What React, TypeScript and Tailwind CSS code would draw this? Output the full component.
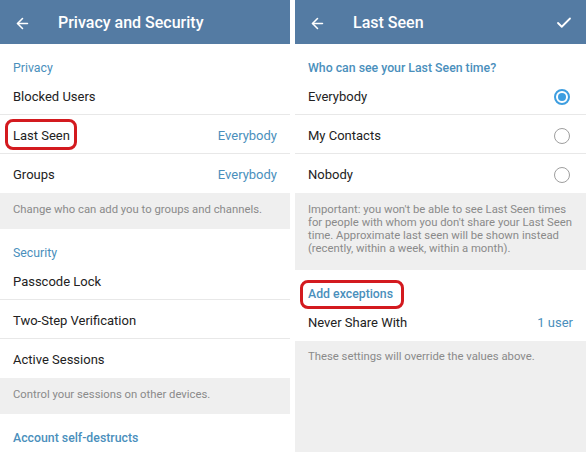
import { ArrowLeft, Check } from "lucide-react";

const font = { fontFamily: "Roboto, 'Noto Sans', sans-serif" };

const Header = ({ title, check }: { title: string; check?: boolean }) => (
  <div className="h-[44px] bg-[#547ba3] flex items-center text-white pt-[2px]">
    <ArrowLeft className="w-[17px] h-[17px] ml-[14px]" strokeWidth={2.2} />
    <div className="ml-[27px] text-[16px] font-medium flex-1">{title}</div>
    {check && <Check className="w-[18px] h-[18px] mr-[13px]" strokeWidth={2.4} />}
  </div>
);

const Label = ({ children, bold }: { children: React.ReactNode; bold?: boolean }) => (
  <div className={`h-[32px] pt-[16px] px-[13px] text-[12.3px] leading-[16px] text-[#4a8fbc] ${bold ? "font-medium" : ""}`}>
    {children}
  </div>
);

const Row = ({ text, value, last, children }: { text: string; value?: string; last?: boolean; children?: React.ReactNode }) => (
  <div className={`relative h-[39px] pt-[3px] flex items-center justify-between px-[13px] ${last ? "" : "border-b border-[#e8e8e8]"}`}>
    <span className="text-[13px] text-[#222]">{text}</span>
    {value && <span className="text-[13px] text-[#4a8fbc]">{value}</span>}
    {children}
  </div>
);

const Note = ({ children, className = "" }: { children: React.ReactNode; className?: string }) => (
  <div className={`bg-[#efefef] px-[13px] text-[11.3px] leading-[13px] text-[#8a8a8a] ${className}`}>{children}</div>
);

const Radio = ({ on }: { on?: boolean }) =>
  on ? (
    <span className="w-[16px] h-[16px] mr-[3px] rounded-full border-2 border-[#3e9ee0] flex items-center justify-center">
      <span className="w-[8px] h-[8px] rounded-full bg-[#3e9ee0]" />
    </span>
  ) : (
    <span className="w-[16px] h-[16px] mr-[3px] rounded-full border-[1.5px] border-[#9e9e9e]" />
  );

export default function App() {
  return (
    <div className="w-[586px] h-[452px] bg-white flex gap-[5px] overflow-hidden" style={font}>
      {/* left: privacy and security */}
      <div className="w-[290px] flex flex-col">
        <Header title="Privacy and Security" />
        <Label>Privacy</Label>
        <Row text="Blocked Users" />
        <Row text="Last Seen" value="Everybody">
          <div className="absolute left-[5px] top-[4px] w-[72px] h-[31px] border-[3px] border-[#d31a1f] rounded-[8px]" />
        </Row>
        <Row text="Groups" value="Everybody" last />
        <Note className="pt-[10px] pb-[13px]">Change who can add you to groups and channels.</Note>
        <Label>Security</Label>
        <Row text="Passcode Lock" />
        <Row text="Two-Step Verification" />
        <Row text="Active Sessions" last />
        <Note className="pt-[10px] pb-[13px]">Control your sessions on other devices.</Note>
        <Label bold>Account self-destructs</Label>
      </div>

      {/* right: last seen */}
      <div className="flex-1 flex flex-col">
        <Header title="Last Seen" check />
        <Label bold>Who can see your Last Seen time?</Label>
        <Row text="Everybody">
          <Radio on />
        </Row>
        <Row text="My Contacts">
          <Radio />
        </Row>
        <Row text="Nobody" last>
          <Radio />
        </Row>
        <Note className="pt-[10px] pb-[15px]">
          Important: you won't be able to see Last Seen times for people with whom you don't share your Last Seen
          time. Approximate last seen will be shown instead (recently, within a week, within a month).
        </Note>
        <div className="relative">
          <Label bold>Add exceptions</Label>
          <div className="absolute left-[5px] top-[10px] w-[104px] h-[29px] border-[3px] border-[#d31a1f] rounded-[8px]" />
        </div>
        <Row text="Never Share With" value="1 user" last />
        <Note className="flex-1 pt-[9px]">These settings will override the values above.</Note>
      </div>
    </div>
  );
}
